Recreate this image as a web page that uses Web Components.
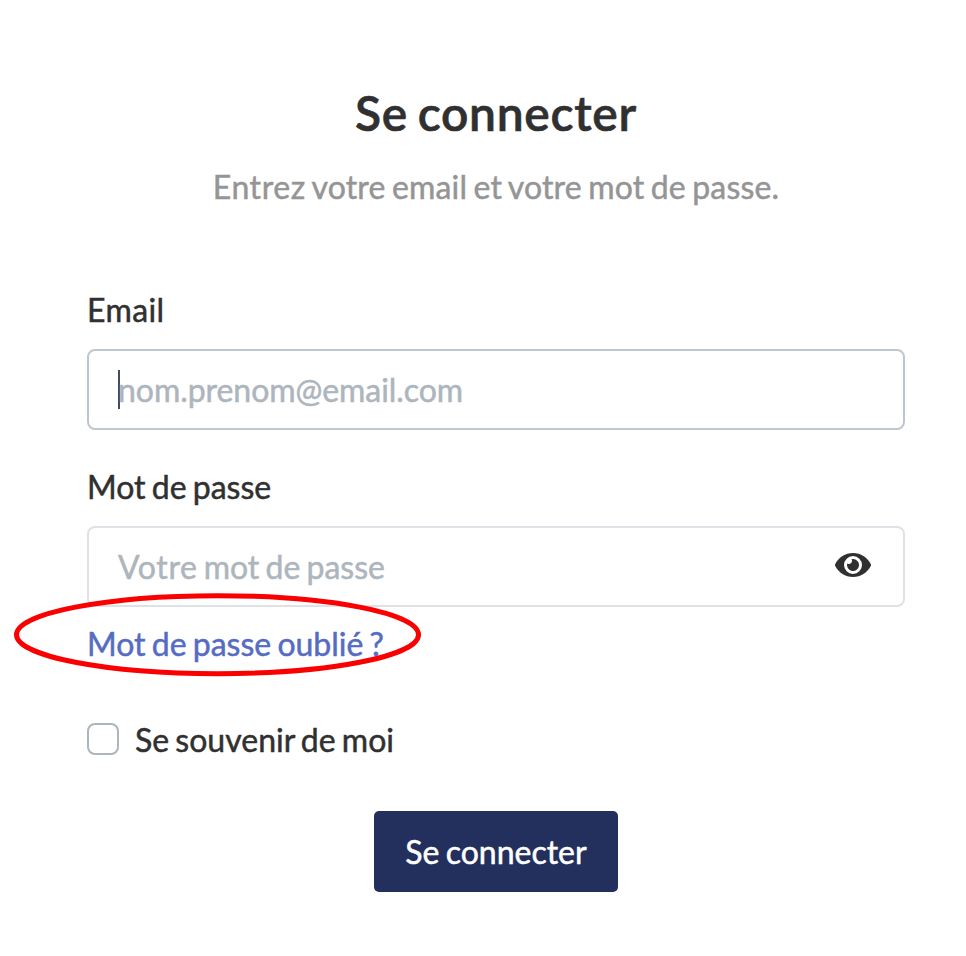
<!DOCTYPE html>
<html lang="fr"><head><meta charset="utf-8"><title>Se connecter</title>
<style>html,body{margin:0;background:#fff}body{font-family:Lato,"Liberation Sans",sans-serif;word-spacing:-2px}</style></head><body>
<login-page></login-page>
<script>
const define=(name,html)=>{const t=document.createElement('template');t.innerHTML=html;
customElements.define(name,class extends HTMLElement{constructor(){super();this.attachShadow({mode:'open'}).append(t.content.cloneNode(true))}})};
define('login-heading',`<style>:host{display:block;text-align:center;white-space:nowrap}h1{margin:0;font-size:48px;line-height:58px;font-weight:600;color:#303030;-webkit-text-stroke:.6px;letter-spacing:.7px;word-spacing:-3px}p{margin:25px 0 0;font-size:32px;line-height:40px;color:#959595;-webkit-text-stroke:.5px;letter-spacing:.17px}</style><h1><slot name="title"></slot></h1><p><slot></slot></p>`);
define('form-field',`<style>:host{display:block}label{display:block;font-size:32px;line-height:40px;color:#303030;-webkit-text-stroke:.5px;letter-spacing:var(--label-tracking,0)}.box{display:flex;align-items:center;box-sizing:border-box;height:81px;margin-top:19px;padding:0 32px 0 29px;border:2px solid var(--edge,#dee2e6);border-radius:8px;font-size:32px;line-height:40px;color:#adb5bd;-webkit-text-stroke:.5px}.value{flex:1;letter-spacing:var(--value-tracking,0)}</style><label><slot name="label"></slot></label><div class="box"><slot name="before"></slot><span class="value"><slot></slot></span><slot name="after"></slot></div>`);
define('text-caret',`<style>:host{display:block;width:2px;height:39px;margin-right:-2px;background:#454b57}</style>`);
define('eye-icon',`<style>:host{display:block;width:36px;height:24px;margin-top:-4px}svg{display:block}</style><svg width="36" height="24" viewBox="0 0 36 24"><path fill="#303030" fill-rule="evenodd" d="M18 0C10.200 0 3.800 4.300.25 11a2.200 2.200 0 0 0 0 2C3.800 19.700 10.200 24 18 24s14.200-4.300 17.750-11a2.200 2.200 0 0 0 0-2C32.200 4.300 25.800 0 18 0Zm0 3a9 9 0 1 1 0 18 9 9 0 0 1 0-18Zm0 3a6 6 0 0 0-1.580.24 3 3 0 0 1-4.180 4.180A6 6 0 1 0 18 6Z"/></svg>`);
define('forgot-link',`<style>:host{display:block;font-size:32px;line-height:40px;color:#566cc3;-webkit-text-stroke:.5px;position:relative}svg{position:absolute;left:-76px;top:-36px;overflow:visible}</style><slot></slot><svg width="412" height="88"><ellipse cx="206.500" cy="46.700" rx="201" ry="39" fill="none" stroke="#fa0000" stroke-width="5"/></svg>`);
define('remember-choice',`<style>:host{display:flex;align-items:center;gap:16px;font-size:32px;line-height:40px;color:#303030;-webkit-text-stroke:.5px}i{box-sizing:border-box;width:32px;height:32px;border:2px solid #adb5bd;border-radius:8px;margin-top:-2px}</style><i></i><span><slot></slot></span>`);
define('submit-button',`<style>:host{display:block;width:244px;margin:0 auto}button{display:block;width:100%;height:81px;padding:0;border:0;border-radius:5px;background:#232f5c;color:white;font:32px/40px Lato,sans-serif;word-spacing:-2px;-webkit-text-stroke:.5px}</style><button><slot></slot></button>`);
define('login-page',`<style>:host{display:block;box-sizing:border-box;height:956px;padding:84px 61px 0 87px}.email{margin-top:83px;--edge:#bdc7d1;--label-tracking:.4px;--value-tracking:-.05px}.password{margin-top:37px}.wide{letter-spacing:.6px}forgot-link{margin-top:17px}remember-choice{margin-top:56px}submit-button{margin-top:51px}</style>
<login-heading><span slot="title">Se connecter</span><span class="wide">Entrez</span> votre email et votre mot de passe.</login-heading>
<form-field class="email"><span slot="label">Email</span><text-caret slot="before"></text-caret>nom.prenom@email.com</form-field>
<form-field class="password"><span slot="label">Mot de passe</span><span class="wide">Votre</span> mot de passe<eye-icon slot="after"></eye-icon></form-field>
<forgot-link>Mot de passe oublié ?</forgot-link><remember-choice>Se souvenir de moi</remember-choice><submit-button>Se connecter</submit-button>`);
</script></body></html>
